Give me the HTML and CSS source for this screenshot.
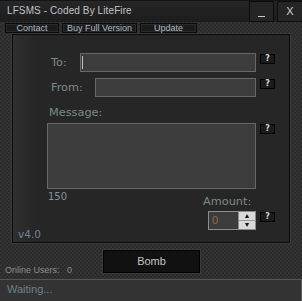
FILE: index.html
```html
<!DOCTYPE html>
<html lang="en">
<head>
    <meta charset="UTF-8">
    <title>LFSMS - Coded By LiteFire</title>
    <link rel="stylesheet" href="styles.css">
</head>
<body>

    <div class="window">
        <div class="titlebar">
            <span class="title">LFSMS - Coded By LiteFire</span>
            <div class="win-btn min"><span class="min-line"></span></div>
            <div class="win-btn close">X</div>
        </div>

        <div class="menu">
            <div class="menu-item contact">Contact</div>
            <div class="menu-item buy">Buy Full Version</div>
            <div class="menu-item update">Update</div>
        </div>

        <div class="panel">
            <div class="row row-to">
                <label class="label to-label">To:</label>
                <div class="field to-field"><span class="caret"></span></div>
                <div class="help">?</div>
            </div>
            <div class="row row-from">
                <label class="label from-label">From:</label>
                <div class="field from-field"></div>
                <div class="help">?</div>
            </div>
            <label class="label msg-label">Message:</label>
            <div class="row row-msg">
                <div class="field msg-field"></div>
                <div class="help">?</div>
            </div>
            <div class="bottom">
                <div class="left-col">
                    <div class="count">150</div>
                    <div class="version">v4.0</div>
                </div>
                <div class="right-col">
                    <label class="label amount-label">Amount:</label>
                    <div class="row amount-row">
                        <div class="spinner">
                            <span class="spin-value">0</span>
                            <div class="spin-btns">
                                <div class="spin up">&#9650;</div>
                                <div class="spin down">&#9660;</div>
                            </div>
                        </div>
                        <div class="help">?</div>
                    </div>
                </div>
            </div>
        </div>

        <div class="footer">
            <span class="online">Online Users:&nbsp;&nbsp; 0</span>
            <div class="bomb">Bomb</div>
        </div>

        <div class="status">Waiting...</div>
    </div>

</body>
</html>
```

FILE: styles.css
```css
body {
    margin: 0;
    padding: 0;
    background: #2a2a2a;
    font-family: "Liberation Sans", Arial, sans-serif;
}
.window {
    width: 302px;
    height: 301px;
    overflow: hidden;
    background: repeating-conic-gradient(#2a2a2a 0 25%, #343434 0 50%) 0 0 / 4px 4px;
}
.titlebar {
    height: 22px;
    display: flex;
    background: linear-gradient(#262626, #1d1d1d);
    border-top: 1px solid #141414;
    box-sizing: border-box;
}
.title {
    color: #bfc4c9;
    font-size: 10px;
    letter-spacing: 0.1px;
    padding: 4px 0 0 7px;
    flex: 1;
}
.win-btn {
    width: 25px;
    height: 21px;
    box-sizing: border-box;
    background: #252525;
    border: 1px solid #0c0c0c;
    color: #c8d0d8;
    font-size: 11px;
    text-align: center;
    line-height: 19px;
}
.min {
    margin-right: 3px;
    position: relative;
}
.min-line {
    position: absolute;
    left: 8px;
    top: 14px;
    width: 7px;
    height: 1px;
    background: #c8c8c8;
}
.close {
    width: 26px;
    margin-right: -1px;
}
.menu {
    display: flex;
    padding-left: 5px;
    gap: 3px;
    height: 12px;
}
.menu-item {
    height: 10px;
    box-sizing: border-box;
    margin-top: 1px;
    background: #1b1b1b;
    border: 1px solid #0a0a0a;
    box-shadow: inset 0 0 0 1px #2a2a2a;
    color: #aebbc9;
    font-size: 9px;
    line-height: 8px;
    text-align: center;
}
.contact { width: 54px; }
.buy { width: 75px; }
.update { width: 57px; }
.panel {
    margin: 0 12px 0 12px;
    height: 209px;
    box-sizing: border-box;
    border: 1px solid #0b0b0b;
    box-shadow: 0 0 0 1px #3a3a3a;
    background: linear-gradient(to right, #2f2f2f, #262626 22px);
}
.row {
    display: flex;
    align-items: flex-start;
}
.label {
    display: block;
    font-family: "DejaVu Sans", Verdana, sans-serif;
    font-size: 11.3px;
    color: #7c8a8a;
    line-height: 19px;
}
.field {
    box-sizing: border-box;
    height: 19px;
    background: #3c3c3c;
    border: 1px solid #686868;
}
.help {
    width: 15px;
    height: 10px;
    box-sizing: border-box;
    margin: 1px 0 0 4px;
    background: #1b1b1b;
    border: 1px solid #000;
    color: #d6d6d6;
    font-family: "DejaVu Sans", sans-serif;
    font-weight: bold;
    font-size: 8px;
    line-height: 8px;
    text-align: center;
}
.row-to {
    margin-top: 18px;
    padding-left: 38px;
}
.to-label { width: 29px; }
.to-field {
    width: 176px;
    position: relative;
}
.caret {
    position: absolute;
    left: 1px;
    top: 2px;
    width: 1px;
    height: 13px;
    background: #bdbdbd;
}
.row-from {
    margin-top: 6px;
    padding-left: 38px;
}
.from-label { width: 44px; }
.from-field { width: 161px; }
.msg-label {
    margin: 8px 0 0 36px;
    line-height: 16px;
}
.row-msg {
    margin-top: 2px;
    padding-left: 34px;
}
.msg-field {
    width: 209px;
    height: 66px;
}
.bottom {
    display: flex;
    margin-top: 2px;
}
.left-col {
    width: 190px;
}
.count {
    padding-left: 35px;
    font-family: "DejaVu Sans", Verdana, sans-serif;
    font-size: 10px;
    line-height: 12px;
    color: #8793a0;
}
.version {
    margin-top: 25px;
    padding-left: 5px;
    font-family: "DejaVu Sans", Verdana, sans-serif;
    font-size: 10.5px;
    line-height: 12px;
    color: #71829a;
}
.amount-label {
    margin-top: 3px;
    line-height: 15px;
}
.amount-row {
    margin-top: 2px;
    padding-left: 5px;
}
.spinner {
    width: 48px;
    height: 19px;
    box-sizing: border-box;
    border: 1px solid #8c8c8c;
    background: #3c3c3c;
    display: flex;
}
.spin-value {
    flex: 1;
    color: #8c6c45;
    font-size: 11px;
    line-height: 17px;
    padding-left: 3px;
}
.spin-btns {
    width: 16px;
    display: flex;
    flex-direction: column;
    border-left: 1px solid #8c8c8c;
}
.spin {
    flex: 1;
    background: #dadada;
    color: #111;
    font-size: 7px;
    line-height: 8px;
    text-align: center;
}
.up { border-bottom: 1px solid #9a9a9a; }
.footer {
    display: flex;
    margin-top: 7px;
    height: 23px;
}
.online {
    width: 98px;
    padding-left: 5px;
    margin-top: 15px;
    color: #8a8e92;
    font-size: 9px;
    line-height: 11px;
    white-space: nowrap;
}
.bomb {
    width: 97px;
    height: 23px;
    box-sizing: border-box;
    background: #111;
    border: 1px solid #000;
    box-shadow: 0 0 0 1px #3a3a3a;
    color: #c6c6c6;
    font-size: 11px;
    line-height: 21px;
    text-align: center;
}
.status {
    margin-top: 6px;
    height: 22px;
    box-sizing: border-box;
    border-top: 1px solid #555;
    border-right: 1px solid #5a5a5a;
    background: #333;
    color: #70808f;
    font-size: 11px;
    padding: 3px 0 0 7px;
    line-height: 13px;
}
```
